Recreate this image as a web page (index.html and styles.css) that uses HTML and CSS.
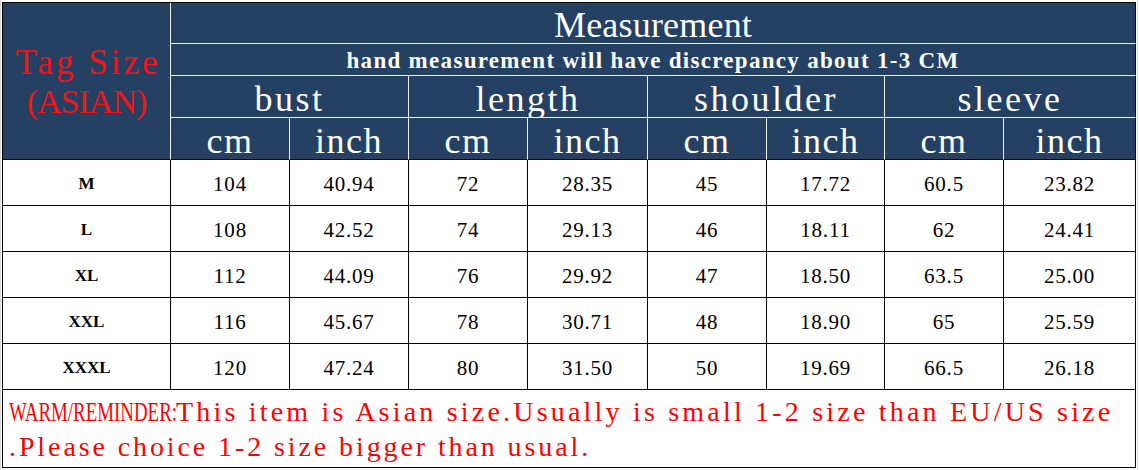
FILE: index.html
```html
<!DOCTYPE html>
<html lang="en">
<head>
<meta charset="utf-8">
<title>Size Chart</title>
<link rel="stylesheet" href="styles.css">
</head>
<body>
<div class="sheet">
  <div class="chart">
    <div class="cell head tag"><span class="tag-line1">Tag Size</span><span class="tag-line2">(ASIAN)</span></div>
    <div class="cell head span8 title">Measurement</div>
    <div class="cell head span8 note">hand measurement will have discrepancy about 1-3 CM</div>
    <div class="cell head span2 group">bust</div>
    <div class="cell head span2 group">length</div>
    <div class="cell head span2 group">shoulder</div>
    <div class="cell head span2 group last">sleeve</div>
    <div class="cell head unit low">cm</div>
    <div class="cell head unit low">inch</div>
    <div class="cell head unit low">cm</div>
    <div class="cell head unit low">inch</div>
    <div class="cell head unit low">cm</div>
    <div class="cell head unit low">inch</div>
    <div class="cell head unit low">cm</div>
    <div class="cell head unit low last">inch</div>

    <div class="cell size">M</div><div class="cell num">104</div><div class="cell num">40.94</div><div class="cell num">72</div><div class="cell num">28.35</div><div class="cell num">45</div><div class="cell num">17.72</div><div class="cell num">60.5</div><div class="cell num">23.82</div>
    <div class="cell size">L</div><div class="cell num">108</div><div class="cell num">42.52</div><div class="cell num">74</div><div class="cell num">29.13</div><div class="cell num">46</div><div class="cell num">18.11</div><div class="cell num">62</div><div class="cell num">24.41</div>
    <div class="cell size">XL</div><div class="cell num">112</div><div class="cell num">44.09</div><div class="cell num">76</div><div class="cell num">29.92</div><div class="cell num">47</div><div class="cell num">18.50</div><div class="cell num">63.5</div><div class="cell num">25.00</div>
    <div class="cell size">XXL</div><div class="cell num">116</div><div class="cell num">45.67</div><div class="cell num">78</div><div class="cell num">30.71</div><div class="cell num">48</div><div class="cell num">18.90</div><div class="cell num">65</div><div class="cell num">25.59</div>
    <div class="cell size">XXXL</div><div class="cell num">120</div><div class="cell num">47.24</div><div class="cell num">80</div><div class="cell num">31.50</div><div class="cell num">50</div><div class="cell num">19.69</div><div class="cell num">66.5</div><div class="cell num">26.18</div>

    <div class="cell span9 reminder"><span class="warm">WARM/REMINDER:</span><span class="line1">This item is Asian size.Usually is small 1-2 size than EU/US size</span><br>.Please choice 1-2 size bigger than usual.</div>
  </div>
</div>
</body>
</html>
```

FILE: styles.css
```css
html, body {
  margin: 0;
  padding: 0;
  background: #ffffff;
}

.sheet {
  width: 1139px;
  height: 470px;
  padding: 2px 0 0 2px;
  box-sizing: border-box;
  background:
    linear-gradient(#d9d9d9, #d9d9d9) 0 0 / 1px 100% no-repeat,
    linear-gradient(#d9d9d9, #d9d9d9) 1137px 0 / 1px 100% no-repeat,
    #ffffff;
}

.chart {
  display: grid;
  grid-template-columns: 168px 119px 119px 119px 120px 119px 118px 119px 132px;
  grid-template-rows: 41px 32px 42px 42px 46px 46px 46px 46px 46px 78px;
  width: max-content;
  border-top: 1px solid #000;
  border-left: 1px solid #000;
  font-family: "Liberation Serif", "Times New Roman", serif;
  color: #000;
}

.cell {
  box-sizing: border-box;
  border-right: 1px solid #000;
  border-bottom: 1px solid #000;
  display: flex;
  align-items: center;
  justify-content: center;
  text-align: center;
  white-space: nowrap;
}

.span2 { grid-column: span 2; }
.span8 { grid-column: span 8; }
.span9 { grid-column: span 9; }

.head {
  background: #244062;
  color: #ffffff;
  border-right-color: #f2f2f2;
  border-bottom-color: #f2f2f2;
}

.head.title,
.head.note,
.head.last {
  border-right-color: #000;
}

.head.low {
  border-bottom-color: #000;
}

.tag {
  grid-row: span 4;
  flex-direction: column;
  color: #f01418;
  font-size: 35px;
  line-height: 39px;
  border-bottom-color: #000;
  padding-top: 2px;
}

.tag-line1 {
  letter-spacing: 3px;
  margin-right: -3px;
}

.tag-line2 {
  font-size: 34px;
  letter-spacing: -1px;
}

.title {
  font-size: 36px;
  letter-spacing: 0.2px;
  padding-top: 3px;
}

.note {
  font-size: 23px;
  font-weight: bold;
  letter-spacing: 1.3px;
  padding-top: 2px;
}

.group {
  font-size: 36px;
  letter-spacing: 2.5px;
  padding-top: 4px;
}

.unit {
  font-size: 36px;
  letter-spacing: 1.5px;
  padding-top: 4px;
}

.size {
  font-size: 17px;
  font-weight: bold;
  padding-top: 3px;
}

.num {
  font-size: 21px;
  letter-spacing: 0.8px;
  padding-top: 3px;
}

.reminder {
  display: block;
  text-align: left;
  white-space: nowrap;
  color: #ff0000;
  font-size: 28px;
  line-height: 35px;
  letter-spacing: 2.9px;
  padding: 4px 0 0 6px;
}

.line1 {
  letter-spacing: 3.2px;
}

.warm {
  display: inline-block;
  letter-spacing: 0;
  transform: scaleX(0.675);
  transform-origin: left center;
  margin-right: -82px;
}
```
